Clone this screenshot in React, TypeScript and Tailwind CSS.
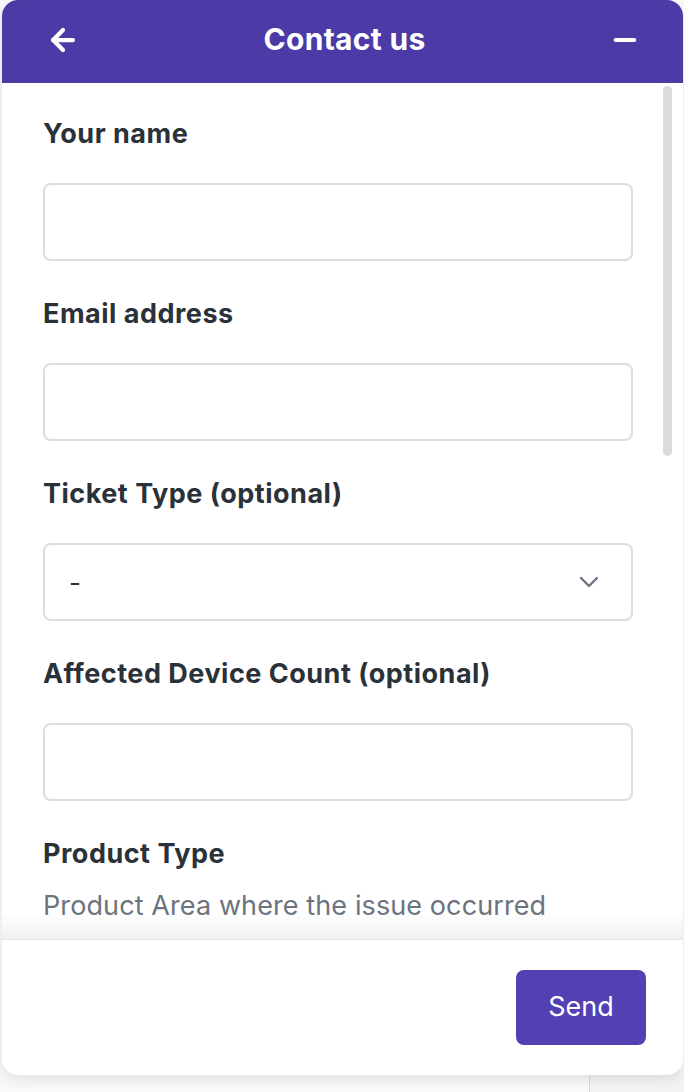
import { ArrowLeft, Minus, ChevronDown } from "lucide-react";

const font = { fontFamily: "Inter, 'Noto Sans', sans-serif" };

function Field({ label, children }: { label: string; children: React.ReactNode }) {
  return (
    <div className="flex flex-col">
      <label className="text-[27px] leading-[36px] font-bold tracking-[0.5px] text-[#2b3138] mb-[31px]">{label}</label>
      {children}
    </div>
  );
}

function TextInput() {
  return (
    <input
      type="text"
      className="h-[78px] w-full rounded-[8px] border-2 border-[#dadde1] bg-white px-[26px] text-[26px] outline-none"
    />
  );
}

export default function App() {
  return (
    <div className="relative w-[684px] h-[1092px] bg-[#f8f9fb] overflow-hidden pl-[2px]" style={font}>
      {/* page behind the widget */}
      <div className="absolute left-[589px] top-[1070px] bottom-0 w-[1px] bg-[#d4d7db]" />
      <div className="absolute left-[590px] top-[1070px] bottom-0 right-0 bg-[#f2f3f5]" />

      {/* Widget */}
      <div className="relative w-[681px] h-[1075px] rounded-[16px] bg-white shadow-[0_4px_14px_rgba(0,0,0,0.10)] overflow-hidden flex flex-col">
        {/* Header */}
        <header className="shrink-0 h-[83px] bg-[#4c3aa6] flex items-center justify-between pl-[44px] pr-[42px] pb-[4px] text-white">
          <ArrowLeft size={34} strokeWidth={3} />
          <h1 className="text-[30px] font-bold tracking-[0.3px]">Contact us</h1>
          <Minus size={32} strokeWidth={3} />
        </header>

        {/* Body */}
        <div className="relative flex-1 min-h-0 overflow-hidden">
          <div className="flex flex-col gap-[35px] pt-[33px] pl-[41px] pr-[50px]">
            <Field label="Your name">
              <TextInput />
            </Field>
            <Field label="Email address">
              <TextInput />
            </Field>
            <Field label="Ticket Type (optional)">
              <div className="h-[78px] w-full rounded-[8px] border-2 border-[#dadde1] bg-white flex items-center justify-between pl-[24px] pr-[26px]">
                <span className="text-[26px] text-[#2b3138]">-</span>
                <ChevronDown size={32} strokeWidth={1.75} className="text-[#6b7280]" />
              </div>
            </Field>
            <Field label="Affected Device Count (optional)">
              <TextInput />
            </Field>
            <div className="flex flex-col">
              <span className="text-[27px] leading-[36px] font-bold tracking-[0.5px] text-[#2b3138]">Product Type</span>
              <span className="mt-[16px] text-[27px] leading-[36px] tracking-[0.1px] text-[#6b737e]">
                Product Area where the issue occurred
              </span>
            </div>
          </div>

          {/* scrollbar */}
          <div className="absolute right-[11px] top-[3px] w-[9px] h-[370px] rounded-full bg-[#d9dcdf]" />
          {/* fade */}
          <div className="absolute left-0 right-0 bottom-0 h-[26px] bg-gradient-to-b from-transparent to-[#eef0f2]" />
        </div>

        {/* Footer */}
        <footer className="shrink-0 h-[136px] border-t border-[#e3e5e8] flex items-center justify-end pr-[37px]">
          <button className="w-[130px] h-[75px] rounded-[8px] bg-[#5340b2] text-white text-[27px]">Send</button>
        </footer>
      </div>
    </div>
  );
}
